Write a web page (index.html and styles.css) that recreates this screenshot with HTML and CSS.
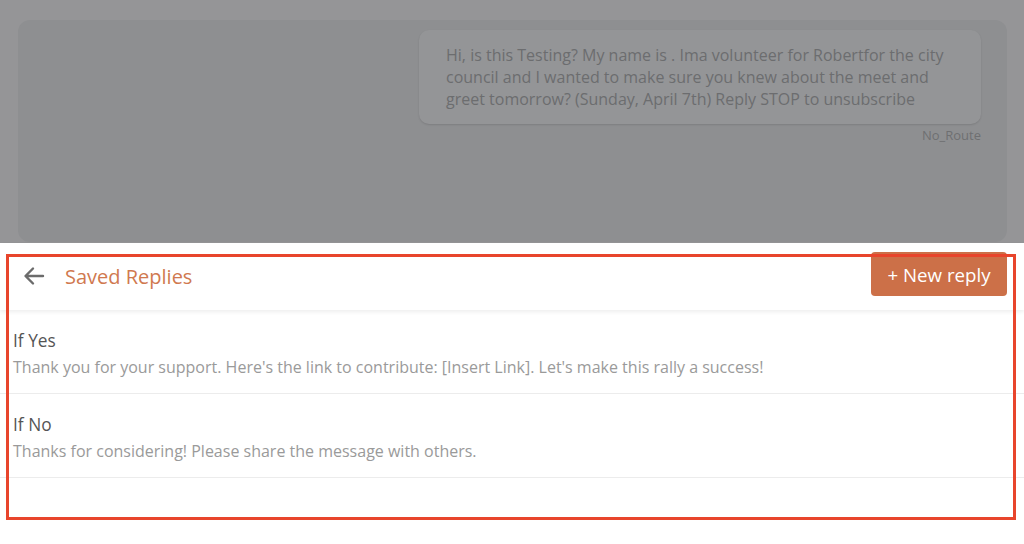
FILE: index.html
```html
<!DOCTYPE html>
<html>
<head>
<meta charset="utf-8">
<link rel="stylesheet" href="styles.css">
</head>
<body>
<div class="backdrop">
  <div class="thread">
    <div class="bubble">Hi, is this Testing? My name is . Ima volunteer for Robertfor the city council and I wanted to make sure you knew about the meet and greet tomorrow? (Sunday, April 7th) Reply STOP to unsubscribe</div>
    <div class="status">No_Route</div>
  </div>
</div>
<div class="panel">
  <div class="panel-header">
    <div class="title-group">
      <svg class="back" width="24" height="24" viewBox="0 0 24 24"><path d="M21 12H4M11 4.5L3.5 12L11 19.5" fill="none" stroke="#6b6b6b" stroke-width="2.4" stroke-linecap="round" stroke-linejoin="round"/></svg>
      <span class="title">Saved Replies</span>
    </div>
    <button class="new-btn">+ New reply</button>
  </div>
  <div class="list">
    <div class="row">
      <div class="row-title">If Yes</div>
      <div class="row-text">Thank you for your support. Here's the link to contribute: [Insert Link]. Let's make this rally a success!</div>
    </div>
    <div class="row">
      <div class="row-title">If No</div>
      <div class="row-text">Thanks for considering! Please share the message with others.</div>
    </div>
  </div>
</div>
<div class="highlight"></div>
</body>
</html>
```
FILE: styles.css
```css
html, body {
  margin: 0;
  padding: 0;
  background: #ffffff;
  font-family: "Open Sans", "Noto Sans", sans-serif;
  width: 1024px;
  height: 544px;
  overflow: hidden;
}
.backdrop {
  height: 243px;
  box-sizing: border-box;
  background: #959597;
  padding: 20px 17px 1px 18px;
  display: flex;
}
.thread {
  flex: 1;
  background: #8e8f91;
  border-radius: 12px;
  padding: 10px 26px 0 0;
  display: flex;
  flex-direction: column;
  align-items: flex-end;
}
.bubble {
  width: 562px;
  box-sizing: border-box;
  background: #949597;
  border-radius: 10px;
  padding: 14px 27px 14px 27px;
  font-size: 16px;
  line-height: 22px;
  color: #6c6d6f;
  box-shadow: 0 1px 2px rgba(0,0,0,0.12);
}
.status {
  margin-top: 2px;
  font-size: 13px;
  line-height: 18px;
  color: #6e6f71;
}
.panel {
  background: #fff;
}
.panel-header {
  height: 67px;
  box-sizing: border-box;
  display: flex;
  justify-content: space-between;
  align-items: flex-start;
  padding: 9px 17px 0 22px;
  box-shadow: 0 2px 4px rgba(0,0,0,0.07);
  position: relative;
}
.title-group {
  display: flex;
  align-items: center;
  height: 48px;
  gap: 19px;
}
.back {
  display: block;
}
.title {
  font-size: 20px;
  color: #d0794f;
}
.new-btn {
  font-family: "Open Sans", "Noto Sans", sans-serif;
  background: #cc7048;
  color: #fff;
  border: none;
  border-radius: 4px;
  height: 44px;
  width: 136px;
  font-size: 18.7px;
  padding: 0;
}
.row {
  padding: 19px 13px 14px 13px;
  border-bottom: 1px solid #ececec;
}
.row-title {
  font-size: 17.3px;
  line-height: 24px;
  color: #555;
}
.row-text {
  margin-top: 3px;
  font-size: 16px;
  line-height: 23px;
  color: #9a9a9a;
}
.highlight {
  position: absolute;
  left: 6px;
  top: 254px;
  width: 1010px;
  height: 266px;
  box-sizing: border-box;
  border: 3px solid #e8452c;
  pointer-events: none;
}
```
